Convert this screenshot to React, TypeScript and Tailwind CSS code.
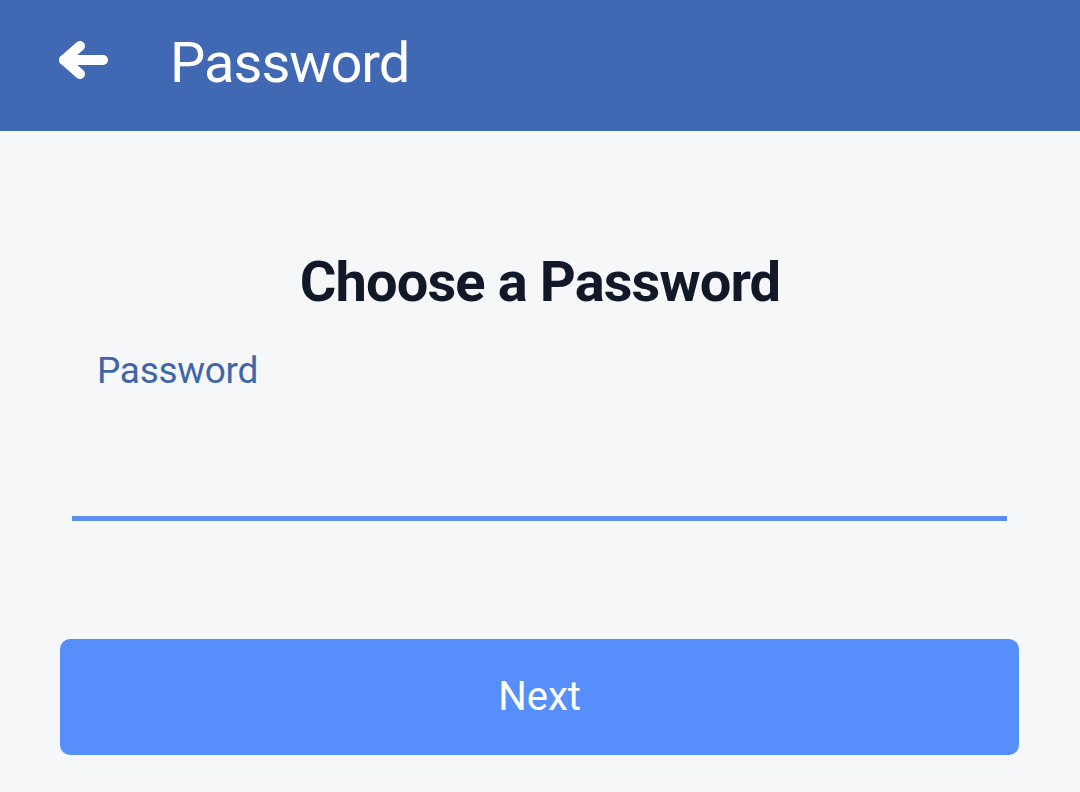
export default function App() {
  return (
    <div className="min-h-[792px] w-full bg-[#f5f7f9] font-['Roboto',sans-serif]">
      <header className="flex h-[131px] items-start bg-[#4168b2]">
        <svg
          className="ml-[54px] mt-[37px] h-[48px] w-[60px]"
          viewBox="0 0 60 48"
          fill="none"
          stroke="white"
          strokeWidth="10"
          strokeLinecap="round"
          strokeLinejoin="round"
        >
          <path d="M10 23 H49" />
          <path d="M26 9 L10 23 L26 37" />
        </svg>
        <h1 className="ml-[56px] pt-[27px] text-[56px] leading-[72px] tracking-[-1px] text-white">
          Password
        </h1>
      </header>

      <main className="flex flex-col">
        <h2 className="pt-[117px] text-center text-[56px] font-bold leading-[68px] tracking-[-0.9px] text-[#111827]">
          Choose a Password
        </h2>

        <div className="mt-[33px] px-[72px]">
          <label className="block pl-[25px] text-[37px] leading-[44px] tracking-[-0.3px] text-[#4066a8]">
            Password
          </label>
          <div className="h-[123px]" />
          <div className="mr-[1px] h-[5px] bg-[#5b8ff0]" />
        </div>

        <div className="mt-[118px] px-[60px]">
          <button className="flex h-[116px] w-[959px] items-center justify-center rounded-[10px] bg-[#568ffc] text-[40px] text-white">
            Next
          </button>
        </div>
      </main>
    </div>
  );
}
